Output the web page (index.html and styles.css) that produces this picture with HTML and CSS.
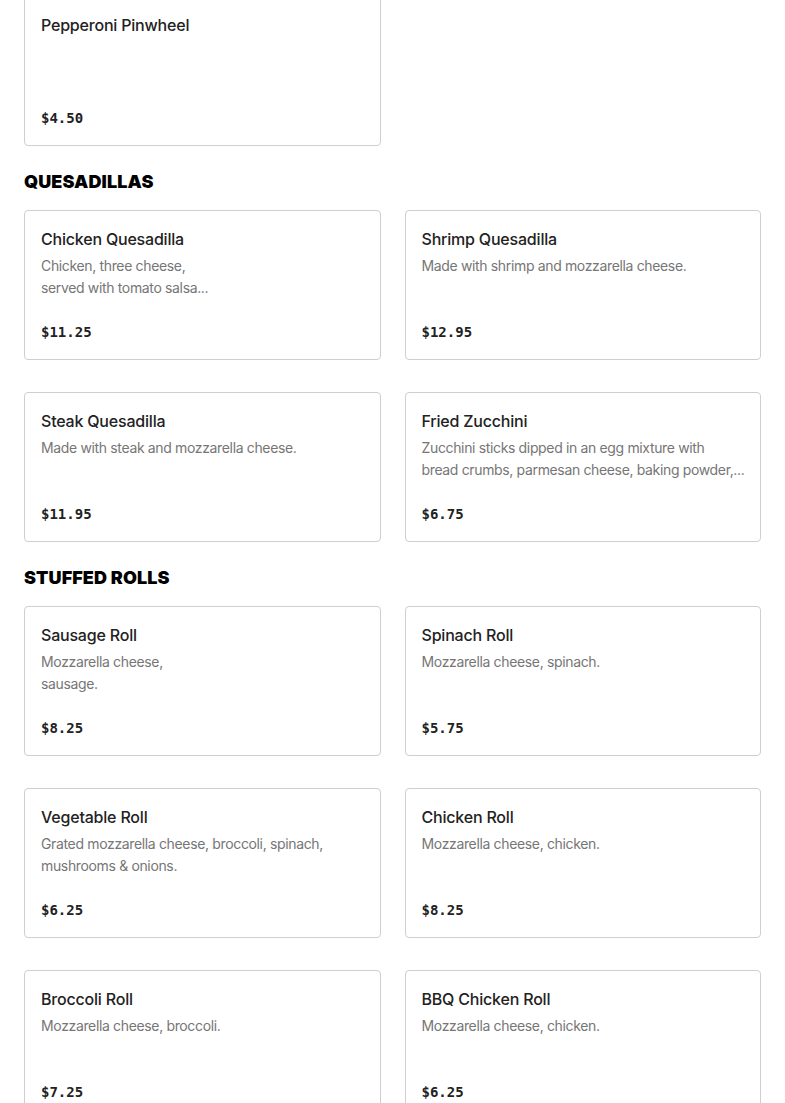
FILE: index.html
```html
<!DOCTYPE html>
<html lang="en">
<head>
<meta charset="utf-8">
<title>Menu</title>
<link rel="stylesheet" href="styles.css">
</head>
<body>
<main class="menu">
  <section class="section section-first">
    <div class="grid">
      <article class="card">
        <h3 class="card-title">Pepperoni Pinwheel</h3>
        <p class="card-desc"></p>
        <div class="card-price">$4.50</div>
      </article>
    </div>
  </section>

  <section class="section">
    <h2 class="section-title">QUESADILLAS</h2>
    <div class="grid">
      <article class="card">
        <h3 class="card-title">Chicken Quesadilla</h3>
        <p class="card-desc">Chicken, three cheese,<br>served with tomato salsa...</p>
        <div class="card-price">$11.25</div>
      </article>
      <article class="card">
        <h3 class="card-title">Shrimp Quesadilla</h3>
        <p class="card-desc">Made with shrimp and mozzarella cheese.</p>
        <div class="card-price">$12.95</div>
      </article>
      <article class="card">
        <h3 class="card-title">Steak Quesadilla</h3>
        <p class="card-desc">Made with steak and mozzarella cheese.</p>
        <div class="card-price">$11.95</div>
      </article>
      <article class="card">
        <h3 class="card-title">Fried Zucchini</h3>
        <p class="card-desc">Zucchini sticks dipped in an egg mixture with<br>bread crumbs, parmesan cheese, baking powder,...</p>
        <div class="card-price">$6.75</div>
      </article>
    </div>
  </section>

  <section class="section">
    <h2 class="section-title">STUFFED ROLLS</h2>
    <div class="grid">
      <article class="card">
        <h3 class="card-title">Sausage Roll</h3>
        <p class="card-desc">Mozzarella cheese,<br>sausage.</p>
        <div class="card-price">$8.25</div>
      </article>
      <article class="card">
        <h3 class="card-title">Spinach Roll</h3>
        <p class="card-desc">Mozzarella cheese, spinach.</p>
        <div class="card-price">$5.75</div>
      </article>
      <article class="card">
        <h3 class="card-title">Vegetable Roll</h3>
        <p class="card-desc">Grated mozzarella cheese, broccoli, spinach,<br>mushrooms &amp; onions.</p>
        <div class="card-price">$6.25</div>
      </article>
      <article class="card">
        <h3 class="card-title">Chicken Roll</h3>
        <p class="card-desc">Mozzarella cheese, chicken.</p>
        <div class="card-price">$8.25</div>
      </article>
      <article class="card">
        <h3 class="card-title">Broccoli Roll</h3>
        <p class="card-desc">Mozzarella cheese, broccoli.</p>
        <div class="card-price">$7.25</div>
      </article>
      <article class="card">
        <h3 class="card-title">BBQ Chicken Roll</h3>
        <p class="card-desc">Mozzarella cheese, chicken.</p>
        <div class="card-price">$6.25</div>
      </article>
    </div>
  </section>
</main>
</body>
</html>
```

FILE: styles.css
```css
html, body {
  margin: 0;
  padding: 0;
  background: #fff;
}

body {
  font-family: Inter, "Noto Sans", "Liberation Sans", sans-serif;
  color: #1f1f1f;
}

.menu {
  margin-top: -4px;
  padding: 0 24px;
  display: flex;
  flex-direction: column;
  gap: 25px;
}

.section {
  display: flex;
  flex-direction: column;
  gap: 17px;
}

.section-title {
  margin: 0;
  font-size: 18px;
  line-height: 22px;
  font-weight: 900;
  color: #000;
  letter-spacing: 0.1px;
}

.grid {
  display: grid;
  grid-template-columns: 1fr 1fr;
  column-gap: 24px;
  row-gap: 32px;
}

.card {
  box-sizing: border-box;
  height: 150px;
  border: 1px solid #cfcfcf;
  border-radius: 4px;
  padding: 16px 16px 15px;
  display: flex;
  flex-direction: column;
  min-width: 0;
}

.card-title {
  margin: 0;
  font-size: 16px;
  line-height: 24px;
  font-weight: 500;
  letter-spacing: -0.2px;
  color: #222;
}

.card-desc {
  margin: 4px 0 0;
  font-size: 14px;
  line-height: 22px;
  letter-spacing: -0.35px;
  color: #767676;
  white-space: nowrap;
}

.card-price {
  margin-top: auto;
  font-family: "DejaVu Sans Mono", "Liberation Mono", monospace;
  font-size: 14px;
  line-height: 24px;
  font-weight: 700;
  color: #222;
}
```
